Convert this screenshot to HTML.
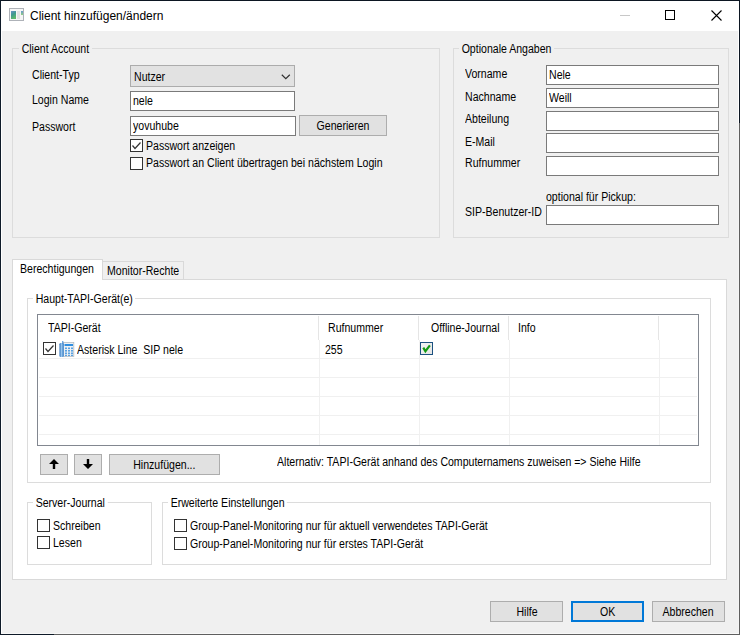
<!DOCTYPE html>
<html><head><meta charset="utf-8">
<style>
*{box-sizing:border-box;margin:0;padding:0}
html,body{width:740px;height:635px;overflow:hidden;background:#f0f0f0}
body{position:relative;font-family:"Liberation Sans",sans-serif;font-size:12px;color:#000}
.a{position:absolute}
.t{position:absolute;line-height:13px;white-space:nowrap;transform:scaleX(0.88);transform-origin:0 0}
.gb{position:absolute;border:1px solid #dcdcdc}
.tb{position:absolute;border:1px solid #7a7a7a;background:#fff}
.btn{position:absolute;border:1px solid #adadad;background:#e1e1e1;text-align:center;line-height:19px;white-space:nowrap}
.btn span{display:inline-block;transform:scaleX(0.88);position:relative;top:1px}
.cb{position:absolute;width:13px;height:13px;border:1px solid #333;background:#fff}
</style></head><body>
<!-- window frame -->
<div class="a" style="left:0;top:0;width:740px;height:1px;background:#0c1622"></div>
<div class="a" style="left:0;top:0;width:1px;height:635px;background:#0e1a28"></div>
<div class="a" style="left:739px;top:0;width:1px;height:123px;background:#0c1622"></div>
<div class="a" style="left:739px;top:123px;width:1px;height:512px;background:#5f5f5f"></div>
<div class="a" style="left:1px;top:634px;width:53px;height:1px;background:#0e1a28"></div>
<div class="a" style="left:54px;top:634px;width:686px;height:1px;background:#5f5f5f"></div>
<div class="a" style="left:1px;top:1px;width:1px;height:633px;background:#fff"></div>
<div class="a" style="left:738px;top:1px;width:1px;height:122px;background:#fff"></div>
<div class="a" style="left:738px;top:123px;width:1px;height:511px;background:#f4f4f4"></div>
<div class="a" style="left:1px;top:633px;width:738px;height:1px;background:#f8f8f8"></div>
<div class="a" style="left:1px;top:1px;width:738px;height:30px;background:#fff"></div>
<!-- title icon -->
<svg class="a" style="left:9px;top:8px" width="15" height="13" viewBox="0 0 15 13">
 <defs><linearGradient id="g1" x1="0" y1="0" x2="0.4" y2="1"><stop offset="0" stop-color="#6a90c8"/><stop offset="0.5" stop-color="#3f9a8e"/><stop offset="1" stop-color="#5cb86a"/></linearGradient>
 <linearGradient id="g2" x1="0" y1="0" x2="0" y2="1"><stop offset="0" stop-color="#6a9ad0"/><stop offset="1" stop-color="#8ed080"/></linearGradient></defs>
 <rect x="0.5" y="0.5" width="14" height="12" fill="#f6f6f6" stroke="#aeb2b8"/>
 <rect x="2" y="3" width="5" height="8" fill="url(#g1)"/>
 <rect x="8" y="3" width="3" height="8" fill="#e2e2e2"/>
 <rect x="12" y="3" width="2" height="4" fill="url(#g2)"/>
</svg>
<div class="t" style="left:30px;top:9px;font-size:12px;line-height:14px;transform:none">Client hinzufügen/ändern</div>
<div class="a" style="left:620px;top:15px;width:10px;height:1px;background:#c8c8c8"></div>
<div class="a" style="left:665px;top:10px;width:10px;height:10px;border:1px solid #000"></div>
<svg class="a" style="left:711px;top:10px" width="11" height="11" viewBox="0 0 11 11"><path d="M0.5 0.5L10.5 10.5M10.5 0.5L0.5 10.5" stroke="#000" stroke-width="1.1"/></svg>

<!-- Client Account group -->
<div class="gb" style="left:12px;top:48px;width:428px;height:190px"></div>
<div class="t" style="left:19px;top:43px;padding:0 3px;background:#f0f0f0">Client Account</div>
<div class="t" style="left:31.5px;top:69px">Client-Typ</div>
<div class="t" style="left:31.5px;top:94px">Login Name</div>
<div class="t" style="left:31.5px;top:121px">Passwort</div>
<div class="a" style="left:130px;top:65px;width:165px;height:22px;border:1px solid #acacac;background:#e2e2e2"></div>
<div class="t" style="left:133.5px;top:71px">Nutzer</div>
<svg class="a" style="left:281px;top:74px" width="10" height="6" viewBox="0 0 10 6"><path d="M0.8 0.8L4.8 4.6L8.8 0.8" fill="none" stroke="#303030" stroke-width="1.2"/></svg>
<div class="tb" style="left:130px;top:91px;width:165px;height:20px"></div>
<div class="t" style="left:133px;top:95px">nele</div>
<div class="tb" style="left:130px;top:116px;width:166px;height:20px"></div>
<div class="t" style="left:133px;top:120px">yovuhube</div>
<div class="btn" style="left:299px;top:115px;width:88px;height:21px"><span>Generieren</span></div>
<div class="cb" style="left:130px;top:139px"></div>
<svg class="a" style="left:130px;top:139px" width="13" height="13" viewBox="0 0 13 13"><path d="M2.5 6.5L5 9.5L10.5 3.5" fill="none" stroke="#333" stroke-width="1.2"/></svg>
<div class="t" style="left:146px;top:140px">Passwort anzeigen</div>
<div class="cb" style="left:130px;top:157px"></div>
<div class="t" style="left:146px;top:157px">Passwort an Client übertragen bei nächstem Login</div>

<!-- Optionale Angaben group -->
<div class="gb" style="left:453px;top:48px;width:276px;height:190px"></div>
<div class="t" style="left:459px;top:43px;padding:0 3px;background:#f0f0f0">Optionale Angaben</div>
<div class="t" style="left:465px;top:68px">Vorname</div>
<div class="t" style="left:465px;top:91px">Nachname</div>
<div class="t" style="left:465px;top:113px">Abteilung</div>
<div class="t" style="left:465px;top:136px">E-Mail</div>
<div class="t" style="left:465px;top:157px">Rufnummer</div>
<div class="t" style="left:546px;top:191px">optional für Pickup:</div>
<div class="t" style="left:465px;top:206px">SIP-Benutzer-ID</div>
<div class="tb" style="left:546px;top:65px;width:173px;height:20px"></div>
<div class="t" style="left:549px;top:69px">Nele</div>
<div class="tb" style="left:546px;top:88px;width:173px;height:20px"></div>
<div class="t" style="left:549px;top:92px">Weill</div>
<div class="tb" style="left:546px;top:111px;width:173px;height:20px"></div>
<div class="tb" style="left:546px;top:133px;width:173px;height:20px"></div>
<div class="tb" style="left:546px;top:156px;width:173px;height:20px"></div>
<div class="tb" style="left:546px;top:205px;width:173px;height:20px"></div>

<!-- Tabs -->
<div class="a" style="left:12px;top:279px;width:715px;height:301px;border:1px solid #d9d9d9;background:#fff"></div>
<div class="a" style="left:103px;top:261px;width:81px;height:19px;border:1px solid #d9d9d9;border-left:none;background:#f0f0f0"></div>
<div class="a" style="left:12px;top:259px;width:91px;height:21px;border:1px solid #d9d9d9;border-bottom:none;background:#fff"></div>
<div class="t" style="left:20px;top:263px">Berechtigungen</div>
<div class="t" style="left:107px;top:265px">Monitor-Rechte</div>

<!-- Haupt-TAPI group -->
<div class="gb" style="left:27px;top:298px;width:684px;height:185px"></div>
<div class="t" style="left:33px;top:293px;padding:0 3px;background:#fff">Haupt-TAPI-Gerät(e)</div>
<!-- listview -->
<div class="a" style="left:37px;top:314px;width:662px;height:132px;border:1px solid #828790;background:#fff"></div>
<div class="t" style="left:48px;top:322px">TAPI-Gerät</div>
<div class="t" style="left:328px;top:322px">Rufnummer</div>
<div class="t" style="left:431px;top:322px">Offline-Journal</div>
<div class="t" style="left:518px;top:322px">Info</div>
<div class="a" style="left:318px;top:316px;width:1px;height:24px;background:#e5e5e5"></div>
<div class="a" style="left:418px;top:316px;width:1px;height:24px;background:#e5e5e5"></div>
<div class="a" style="left:508px;top:316px;width:1px;height:24px;background:#e5e5e5"></div>
<div class="a" style="left:658px;top:316px;width:1px;height:24px;background:#e5e5e5"></div>
<!-- grid -->
<div class="a" style="left:39px;top:358px;width:658px;height:1px;background:#f0f0f0"></div>
<div class="a" style="left:39px;top:377px;width:658px;height:1px;background:#f0f0f0"></div>
<div class="a" style="left:39px;top:396px;width:658px;height:1px;background:#f0f0f0"></div>
<div class="a" style="left:39px;top:415px;width:658px;height:1px;background:#f0f0f0"></div>
<div class="a" style="left:39px;top:434px;width:658px;height:1px;background:#f0f0f0"></div>
<div class="a" style="left:319px;top:340px;width:1px;height:105px;background:#f0f0f0"></div>
<div class="a" style="left:419px;top:340px;width:1px;height:105px;background:#f0f0f0"></div>
<div class="a" style="left:509px;top:340px;width:1px;height:105px;background:#f0f0f0"></div>
<div class="a" style="left:659px;top:340px;width:1px;height:105px;background:#f0f0f0"></div>
<!-- row 1 -->
<div class="cb" style="left:43px;top:342px"></div>
<svg class="a" style="left:43px;top:342px" width="13" height="13" viewBox="0 0 13 13"><path d="M2.5 6.5L5 9.5L10.5 3.5" fill="none" stroke="#333" stroke-width="1.2"/></svg>
<svg class="a" style="left:59px;top:341px" width="16" height="17" viewBox="0 0 16 17">
 <defs><linearGradient id="hs" x1="0" y1="0" x2="1" y2="0"><stop offset="0" stop-color="#1e68b8"/><stop offset="0.45" stop-color="#9cc8ee"/><stop offset="1" stop-color="#2a78c8"/></linearGradient></defs>
 <rect x="4.5" y="1.5" width="10.3" height="14" fill="#eef1f4" stroke="#b4bcc4" stroke-width="0.8"/>
 <rect x="0.5" y="2" width="4.2" height="14" rx="1.2" fill="url(#hs)"/>
 <rect x="3.2" y="0" width="1.1" height="3" fill="#4a90d8"/>
 <rect x="5.5" y="3" width="8.5" height="2" fill="#2f8ee0"/>
 <g fill="#5aa2e2"><rect x="6" y="6.5" width="2" height="1.6"/><rect x="9" y="6.5" width="2" height="1.6"/><rect x="12" y="6.5" width="2" height="1.6"/>
 <rect x="6" y="9" width="2" height="1.6"/><rect x="9" y="9" width="2" height="1.6"/><rect x="12" y="9" width="2" height="1.6"/>
 <rect x="6" y="11.5" width="2" height="1.6"/><rect x="9" y="11.5" width="2" height="1.6"/><rect x="12" y="11.5" width="2" height="1.6"/>
 <rect x="6" y="13.8" width="2" height="1.2"/><rect x="9" y="13.8" width="2" height="1.2"/><rect x="12" y="13.8" width="2" height="1.2"/></g>
</svg>
<div class="t" style="left:77px;top:344px">Asterisk Line&nbsp; SIP nele</div>
<div class="t" style="left:325px;top:344px">255</div>
<div class="a" style="left:420px;top:342px;width:13px;height:13px;border:1px solid #1c5180;background:linear-gradient(135deg,#f4f4f4,#e4e4e4)"></div>
<svg class="a" style="left:420px;top:342px" width="13" height="13" viewBox="0 0 13 13"><path d="M3.3 5.6L5.4 9.2L9.9 3.4" fill="none" stroke="#119a11" stroke-width="2.2" stroke-linejoin="miter"/></svg>
<!-- buttons -->
<div class="btn" style="left:40px;top:454px;width:28px;height:21px"></div>
<svg class="a" style="left:49px;top:459px" width="10" height="10" viewBox="0 0 10 10"><path d="M5 0L10 5H6.2V10H3.8V5H0Z" fill="#000"/></svg>
<div class="btn" style="left:74px;top:454px;width:28px;height:21px"></div>
<svg class="a" style="left:83px;top:459px" width="10" height="10" viewBox="0 0 10 10"><path d="M5 10L10 5H6.2V0H3.8V5H0Z" fill="#000"/></svg>
<div class="btn" style="left:109px;top:454px;width:111px;height:21px"><span>Hinzufügen...</span></div>
<div class="t" style="left:277px;top:456px">Alternativ: TAPI-Gerät anhand des Computernamens zuweisen =&gt; Siehe Hilfe</div>

<!-- Server journal -->
<div class="gb" style="left:27px;top:502px;width:125px;height:63px"></div>
<div class="t" style="left:33px;top:497px;padding:0 3px;background:#fff">Server-Journal</div>
<div class="cb" style="left:37px;top:519px"></div>
<div class="t" style="left:53px;top:520px">Schreiben</div>
<div class="cb" style="left:37px;top:536px"></div>
<div class="t" style="left:53px;top:537px">Lesen</div>

<!-- Erweiterte -->
<div class="gb" style="left:162px;top:502px;width:549px;height:63px"></div>
<div class="t" style="left:168px;top:497px;padding:0 3px;background:#fff">Erweiterte Einstellungen</div>
<div class="cb" style="left:174px;top:519px"></div>
<div class="t" style="left:190px;top:520px">Group-Panel-Monitoring nur für aktuell verwendetes TAPI-Gerät</div>
<div class="cb" style="left:174px;top:537px"></div>
<div class="t" style="left:190px;top:538px">Group-Panel-Monitoring nur für erstes TAPI-Gerät</div>

<!-- bottom buttons -->
<div class="btn" style="left:490px;top:601px;width:73px;height:21px"><span style="left:1px">Hilfe</span></div>
<div class="btn" style="left:571px;top:601px;width:73px;height:21px;border:2px solid #0078d7;line-height:17px"><span>OK</span></div>
<div class="btn" style="left:652px;top:601px;width:73px;height:21px"><span>Abbrechen</span></div>
</body></html>
